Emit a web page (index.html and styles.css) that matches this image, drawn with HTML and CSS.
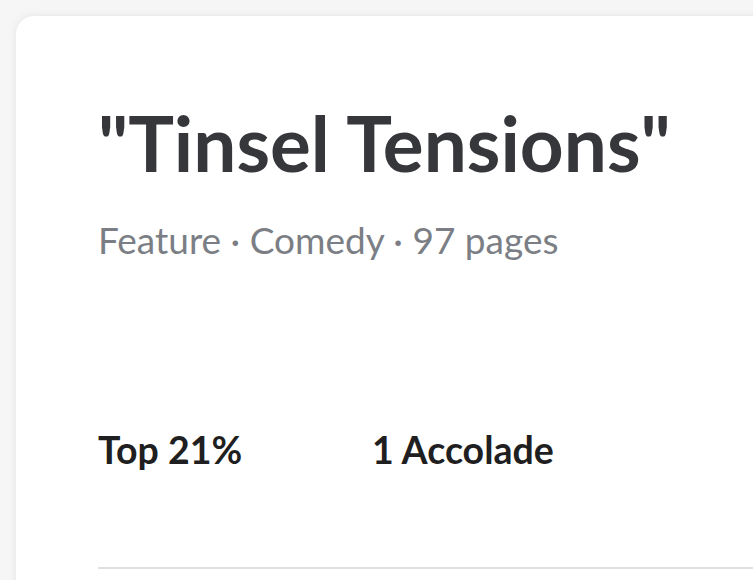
FILE: index.html
```html
<!DOCTYPE html>
<html lang="en">
<head>
    <meta charset="UTF-8">
    <meta name="viewport" content="width=device-width, initial-scale=1.0">
    <title>Tinsel Tensions</title>
    <link rel="stylesheet" href="styles.css">
</head>
<body>
    <!-- Script card -->
    <div class="card">
        <h1 class="title">"Tinsel Tensions"</h1>
        <div class="meta">Feature · Comedy · 97 pages</div>

        <div class="stats">
            <div class="stat">Top 21%</div>
            <div class="stat">1 Accolade</div>
        </div>

        <div class="divider"></div>
    </div>
</body>
</html>
```

FILE: styles.css
```css
html, body {
    overflow: hidden;
}
body {
    font-family: Lato, "Open Sans", sans-serif;
    margin: 0;
    padding: 16px 0 0 16px;
    background-color: #f6f6f6;
    height: 580px;
    box-sizing: border-box;
}
/* Card */
.card {
    width: 800px;
    min-height: 700px;
    background-color: white;
    border-radius: 18px;
    box-shadow: 0 0 8px rgba(0, 0, 0, 0.08);
    padding: 88px 0 0 82px;
    box-sizing: border-box;
}
.title {
    margin: 0;
    font-size: 76.5px;
    font-weight: bold;
    line-height: 1;
    color: #36373b;
}
.meta {
    margin-top: 40px;
    font-size: 37px;
    line-height: 1;
    color: #7b7f85;
}
.stats {
    display: grid;
    grid-template-columns: 274px 274px;
    margin-top: 173px;
}
.stat {
    font-size: 37.5px;
    font-weight: bold;
    line-height: 1;
    color: #1f1f21;
}
.divider {
    margin-top: 99px;
    height: 2px;
    background-color: #e0e0e0;
}
```
